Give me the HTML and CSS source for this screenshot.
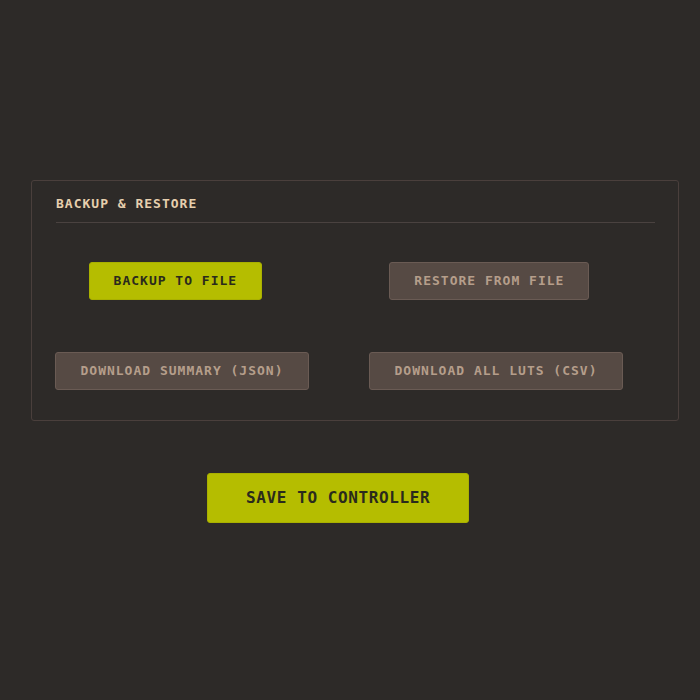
FILE: index.html
```html
<!DOCTYPE html>
<html lang="en">
<head>
<meta charset="utf-8">
<title>Backup &amp; Restore</title>
<link rel="stylesheet" href="styles.css">
</head>
<body>
<main class="page">
  <section class="panel">
    <h2 class="panel-title">BACKUP &amp; RESTORE</h2>
    <div class="actions">
      <button class="btn btn-primary">BACKUP TO FILE</button>
      <button class="btn btn-secondary">RESTORE FROM FILE</button>
      <button class="btn btn-secondary">DOWNLOAD SUMMARY (JSON)</button>
      <button class="btn btn-secondary">DOWNLOAD ALL LUTS (CSV)</button>
    </div>
  </section>
  <div class="save-row">
    <button class="btn-save">SAVE TO CONTROLLER</button>
  </div>
</main>
</body>
</html>
```

FILE: styles.css
```css
html, body {
  margin: 0;
  padding: 0;
  background: #2d2a28;
}
body {
  font-family: "DejaVu Sans Mono", "Liberation Mono", monospace;
  width: 700px;
  height: 700px;
}
.page {
  padding: 180px 0 0 31px;
  width: 648px;
}
.panel {
  border: 1px solid #4a3f3c;
  border-radius: 3px;
  background: #2d2a28;
  padding: 15px 23px 30px 24px;
}
.panel-title {
  margin: 0;
  font-size: 13px;
  line-height: 15px;
  font-weight: bold;
  letter-spacing: 1px;
  color: #e6cfae;
  padding-bottom: 11px;
  border-bottom: 1px solid #4a4240;
}
.actions {
  margin: 39px 0 0 -1px;
  width: 568px;
  display: flex;
  flex-wrap: wrap;
  justify-content: space-around;
  column-gap: 60px;
  row-gap: 52px;
}
.btn {
  font-family: "DejaVu Sans Mono", "Liberation Mono", monospace;
  font-size: 13px;
  line-height: 16px;
  font-weight: bold;
  letter-spacing: 1px;
  padding: 10px 24px;
  border-radius: 3px;
  border: 1px solid transparent;
  cursor: pointer;
}
.btn-primary {
  background: #b5bd00;
  border-color: #a9b000;
  color: #2a2a1c;
}
.btn-secondary {
  background: #564a44;
  border-color: #6a5b54;
  color: #b59e8b;
}
.save-row {
  display: flex;
  padding-left: 176px;
  margin-top: 52px;
}
.btn-save {
  font-family: "DejaVu Sans Mono", "Liberation Mono", monospace;
  font-size: 16px;
  line-height: 20px;
  font-weight: bold;
  letter-spacing: 0.6px;
  padding: 14px 38px;
  border-radius: 3px;
  border: 1px solid #a9b000;
  background: #b5bd00;
  color: #2a2a1c;
  cursor: pointer;
}
```
